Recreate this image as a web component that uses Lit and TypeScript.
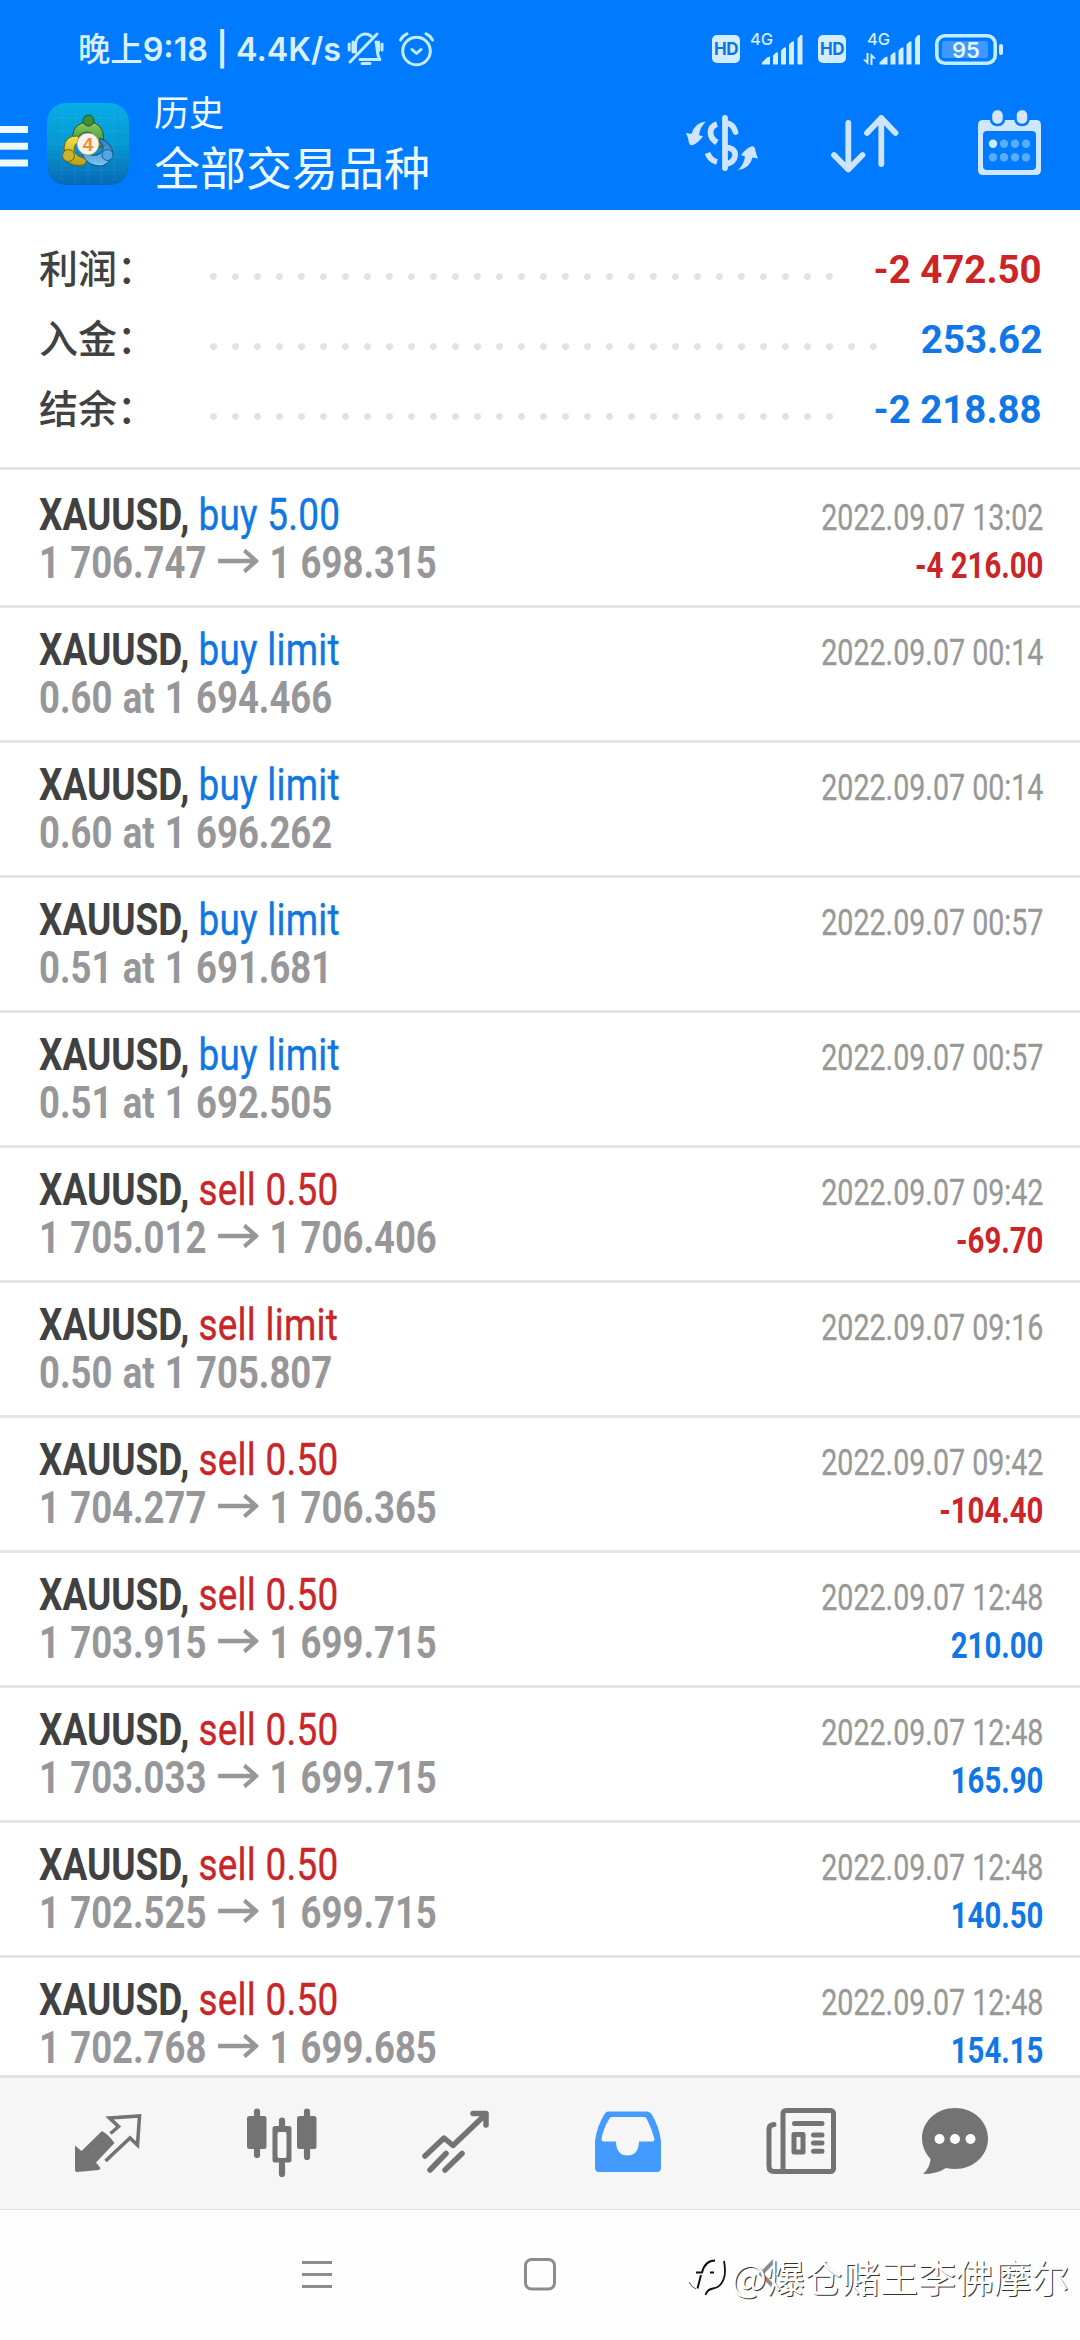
import { LitElement, html, svg, css } from "lit";
import { customElement } from "lit/decorators.js";
import { classMap } from "lit/directives/class-map.js";

interface Deal {
  side: "buy" | "sell";
  label: string;
  open: string;
  close?: string;
  time: string;
  profit?: string;
}

const DEALS: Deal[] = [
  { side: "buy", label: "buy 5.00", open: "1 706.747", close: "1 698.315", time: "2022.09.07 13:02", profit: "-4 216.00" },
  { side: "buy", label: "buy limit", open: "0.60 at 1 694.466", time: "2022.09.07 00:14" },
  { side: "buy", label: "buy limit", open: "0.60 at 1 696.262", time: "2022.09.07 00:14" },
  { side: "buy", label: "buy limit", open: "0.51 at 1 691.681", time: "2022.09.07 00:57" },
  { side: "buy", label: "buy limit", open: "0.51 at 1 692.505", time: "2022.09.07 00:57" },
  { side: "sell", label: "sell 0.50", open: "1 705.012", close: "1 706.406", time: "2022.09.07 09:42", profit: "-69.70" },
  { side: "sell", label: "sell limit", open: "0.50 at 1 705.807", time: "2022.09.07 09:16" },
  { side: "sell", label: "sell 0.50", open: "1 704.277", close: "1 706.365", time: "2022.09.07 09:42", profit: "-104.40" },
  { side: "sell", label: "sell 0.50", open: "1 703.915", close: "1 699.715", time: "2022.09.07 12:48", profit: "210.00" },
  { side: "sell", label: "sell 0.50", open: "1 703.033", close: "1 699.715", time: "2022.09.07 12:48", profit: "165.90" },
  { side: "sell", label: "sell 0.50", open: "1 702.525", close: "1 699.715", time: "2022.09.07 12:48", profit: "140.50" },
  { side: "sell", label: "sell 0.50", open: "1 702.768", close: "1 699.685", time: "2022.09.07 12:48", profit: "154.15" },
];

const TOTALS = [
  { name: "利润：", value: "-2 472.50", red: true, dots: 29 },
  { name: "入金：", value: "253.62", red: false, dots: 31 },
  { name: "结余：", value: "-2 218.88", red: false, dots: 29 },
];

const signal = svg`
  <path d="M0 30V28L5 23L8 22V30Z M11 30V21L14 18H16V30Z M19 30V16L22 13H24V30Z M27 30V10L30 7H32V30Z M35.500 30V4L38.500 0.500H40.500V30Z"/>`;

@customElement("status-bar")
class StatusBar extends LitElement {
  static styles = css`
    :host { display: flex; height: 98px; align-items: center; padding: 0 77px 0 78px; color: #d9f1ff; }
    svg { display: block; flex: none; fill: #d3edff; overflow: visible; }
    .clock { font: 500 33px/40px Inter, "Noto Sans CJK SC", sans-serif; width: 270px; white-space: pre; }
    .clock span { display: inline-block; transform-origin: left center; transform: scaleX(0.98); }
    .clock b { font-weight: 600; }
    .line { fill: none; stroke: #c4ecff; stroke-width: 3; stroke-linecap: round; stroke-linejoin: round; }
    .alarm { margin-left: 16px; }
    .right { margin-left: auto; display: flex; align-items: center; }
    .hd { width: 28px; height: 28px; border-radius: 5px; background: #d3edff; color: #0b74e6; font: 700 17px/29px Inter, sans-serif; text-align: center; letter-spacing: -0.5px; }
    .sig { margin-left: 10px; }
    .sig text { font: 500 16.5px Inter, sans-serif; }
    .hd.second { margin-left: 15px; }
    .sig.second { margin-left: 17px; }
    .battery { margin-left: 15px; }
    .battery text { font: 600 22px Inter, sans-serif; fill: #e6f6ff; }
  `;
  render() {
    return html`
      <div class="clock"><span>晚上<b>9:18 | 4.4K/s</b></span></div>
      <svg class="line" width="35" height="34" viewBox="0 0 35 34">
        <path d="M2 30L29 2M7.500 20V14C7.500 2 18 0 23 4M28 10C30 16 28 22 32 27.500H12M1.200 12V18M5 10V20M30.500 10V19M34 12V18" />
        <path d="M14 31.500H22" />
      </svg>
      <svg class="line alarm" width="35" height="35" viewBox="0 0 35 35">
        <circle cx="17.500" cy="19" r="13.800" />
        <path d="M13 17.500L17.500 21.500L22 17.500M1.500 8Q3.500 3.500 8 1.800M33.500 8Q31.500 3.500 27 1.800" />
      </svg>
      <div class="right">
        <div class="hd">HD</div>
        <svg class="sig" width="53" height="32" viewBox="0 0 53 32"><text x="0" y="12">4G</text><g transform="translate(12 1.500)">${signal}</g></svg>
        <div class="hd second">HD</div>
        <svg class="sig second" width="57" height="32" viewBox="0 0 57 32">
          <text x="4" y="12">4G</text>
          <path d="M5.500 20V32L0.500 27V26L3.500 27V20ZM7.500 32V20L12.500 25V26L9.500 25V32Z"/>
          <g transform="translate(16.500 1.500)">${signal}</g>
        </svg>
        <svg class="battery" width="68" height="31" viewBox="0 0 68 31">
          <rect x="1.800" y="1.800" width="58.400" height="27.400" rx="8" fill="none" stroke="#c4ecff" stroke-width="3.600" />
          <rect x="7" y="7" width="46" height="17" rx="2" fill="#3d98ff" />
          <rect x="64" y="10" width="4" height="11" rx="2" />
          <text x="31" y="23.500" text-anchor="middle">95</text>
        </svg>
      </div>`;
  }
}

@customElement("app-header")
class AppHeader extends LitElement {
  static styles = css`
    :host { display: flex; height: 112px; color: #effaff; font-family: "Noto Sans CJK SC", sans-serif; }
    svg { display: block; flex: none; }
    .menu { margin-top: 28px; fill: #effaff; }
    .logo { margin: 5px 0 0 19px; }
    .logo text { font: 700 19px "Liberation Sans", sans-serif; fill: #f08a3c; }
    .titles { margin-left: 25px; white-space: nowrap; }
    .small { font-size: 35px; line-height: 35px; margin-top: -5px; }
    .big { font-size: 46px; line-height: 50px; margin-top: 12px; }
    .tools { margin-left: auto; padding-right: 39px; display: flex; align-items: flex-start; }
    .dollar { margin-top: 17px; }
    .sort { margin: 16px 0 0 73px; }
    .calendar { margin: 12px 0 0 78px; }
    .stroke { fill: none; stroke: #cfe4ff; stroke-width: 5.800; stroke-linecap: round; stroke-linejoin: round; }
    .butt { stroke-linecap: butt; }
  `;
  render() {
    const cells = [15, 26, 37, 48];
    const arrow = svg`<path d="M20 6.500Q14 12 13 20L17 21.500Q12 28 7 30Q4 31 3 28Q2 22 0 18L5.500 19Q8 8 20 6.500Z" fill="#cfe4ff"/>`;
    return html`
      <svg class="menu" width="28" height="41" viewBox="0 0 28 41"><path d="M0 0H28V7H0ZM0 16.700H28V23.700H0ZM0 33.500H28V40.500H0Z" /></svg>
      <svg class="logo" width="82" height="82" viewBox="0 0 82 82">
        <defs>
          <linearGradient id="bg" x2="0" y2="1"><stop offset="0" stop-color="#06ace8" /><stop offset="0.500" stop-color="#0699d0" /><stop offset="1" stop-color="#0768b6" /></linearGradient>
          <linearGradient id="gr" x2="0" y2="1"><stop offset="0" stop-color="#8fc75a" /><stop offset="1" stop-color="#2b8a2c" /></linearGradient>
          <linearGradient id="ye" x2="0" y2="1"><stop offset="0" stop-color="#f1e54c" /><stop offset="1" stop-color="#b99d14" /></linearGradient>
          <linearGradient id="bl" x2="0" y2="1"><stop offset="0" stop-color="#2b78bf" /><stop offset="1" stop-color="#7cc6f2" /></linearGradient>
        </defs>
        <rect width="82" height="82" rx="19" fill="url(#bg)" />
        <path d="M15 4V78M28 2V80M41 2V80M54 2V80M67 4V78M4 15H78M2 28H80M2 41H80M2 54H80M4 67H78" stroke="#5cc9ee" stroke-opacity="0.140" fill="none" />
        <path d="M26 38Q24 24 35 20H48Q59 25 56 43L49 46Q50 30 41 29Q33 29 31 36Z" fill="url(#gr)" stroke="#26531f" />
        <path d="M31 33Q18 32 17 45L20 58Q26 64 37 62L41 56Q28 54 27 47Q27 41 32 39Z" fill="url(#ye)" stroke="#6d6418" />
        <path d="M53 35Q65 40 66 51Q63 60 55 63Q42 64 35 52L41 51Q51 55 56 47Q57 41 52 39Z" fill="url(#bl)" stroke="#164c7c" />
        <circle cx="41.500" cy="17.500" r="5.500" fill="#3d8f39" stroke="#205320" />
        <circle cx="21.500" cy="52.500" r="6" fill="#c9b32c" stroke="#6d6418" />
        <circle cx="60.500" cy="52" r="5.500" fill="#4fa6e2" stroke="#1b5c92" />
        <circle cx="41" cy="41" r="11" fill="#f8f3ec" stroke="#a5966d" stroke-width="0.800" />
        <text x="41" y="48" text-anchor="middle">4</text>
      </svg>
      <div class="titles"><div class="small">历史</div><div class="big">全部交易品种</div></div>
      <div class="tools">
        <svg class="dollar" width="72" height="56" viewBox="0 0 72 56">
          ${arrow}
          <g transform="rotate(180 36 30.750)">${arrow}</g>
          <path class="stroke" d="M39 3V53M41 8Q47 9 49.500 17M41 32.500Q50 34 49 41Q48 47 41 49" />
          <path class="stroke butt" d="M31 9Q24.500 11 24.500 18Q25 24 31 27.500M21.500 38Q24 45 31 47" />
        </svg>
        <svg class="sort" width="69" height="60" viewBox="0 0 69 60">
          <path class="stroke" d="M17.300 9V55M3 41L17.300 55.500L31.500 41M50.300 50V4M36 19L50.300 4L64.500 19" />
        </svg>
        <svg class="calendar" width="63" height="65" viewBox="0 0 63 65">
          <path fill="#cfe6ff" fill-rule="evenodd" d="M5 10H58Q63 10 63 15V60Q63 65 58 65H5Q0 65 0 60V15Q0 10 5 10ZM9 21Q5 21 5 25V56Q5 60 9 60H54Q58 60 58 56V25Q58 21 54 21Z" />
          <rect x="13" y="-1" width="13" height="16" rx="6" fill="#d6e4ff" stroke="#007aff" stroke-width="2.500" />
          <rect x="37.500" y="-1" width="13" height="16" rx="6" fill="#d6e4ff" stroke="#007aff" stroke-width="2.500" />
          ${[33.7, 47.3].map((y, r) => cells.map((x, c) => svg`<circle cx=${x} cy=${y} r="4.200" fill=${r + c === 0 ? "#c9efff" : "#57adff"} />`))}
        </svg>
      </div>`;
  }
}

@customElement("totals-panel")
class TotalsPanel extends LitElement {
  static styles = css`
    :host { display: block; height: 260px; box-sizing: border-box; padding: 23px 38px 0 39px; border-bottom: 3px solid #e4e4e4; background: #fff; }
    .row { display: flex; height: 70px; align-items: flex-start; }
    .name { width: 171px; font: 500 39px/66px "Noto Sans CJK SC", sans-serif; color: #414141; }
    .dots { height: 7px; margin-top: 40px; background: radial-gradient(circle at 3.500px 3.500px, #e2e2e2 0 3px, transparent 3.800px) 0 0 / 22px 7px repeat-x; }
    .value { margin-left: auto; font: 700 39px/74px Roboto, sans-serif; color: #1177e6; white-space: pre; transform: scaleX(0.985); transform-origin: right center; }
    .red { color: #cc2427; }
  `;
  render() {
    return TOTALS.map((t) => html`<div class="row">
      <span class="name">${t.name}</span>
      <span class="dots" style="width:${t.dots * 22}px"></span>
      <span class=${classMap({ value: true, red: t.red })}>${t.value}</span>
    </div>`);
  }
}

@customElement("deal-list")
class DealList extends LitElement {
  static styles = css`
    :host { display: block; flex: 1; min-height: 0; overflow: hidden; padding-top: 3px; background: #fff; font-family: Roboto, sans-serif; white-space: pre; }
    .row { display: flex; justify-content: space-between; height: 135px; box-sizing: border-box; border-bottom: 3px solid #e4e4e4; padding: 18px 37px 0 39px; }
    .row:last-child { height: 117px; border-bottom: 0; }
    .left { font-size: 44px; line-height: 48px; }
    .left > div { transform-origin: left top; }
    .title { transform: scaleX(0.839); }
    .price { transform: scaleX(0.829); font-weight: 700; color: #97979a; word-spacing: 1.5px; }
    .right { font-size: 36px; line-height: 48px; text-align: right; padding-top: 3px; }
    .right > div { transform-origin: right top; }
    .sym { font-weight: 700; color: #414141; }
    .buy, .sell { letter-spacing: 0.3px; -webkit-text-stroke: 0.4px currentColor; }
    .buy { color: #1177e0; }
    .sell { color: #c8262a; }
    .arrow { margin: 0 13px 0 14px; vertical-align: 5px; fill: none; stroke: #97979a; stroke-width: 4.500; }
    .time { color: #989898; transform: scaleX(0.795); -webkit-text-stroke: 0.3px currentColor; }
    .profit { font-weight: 700; color: #1177e6; transform: scaleX(0.815); }
    .loss { color: #cc2427; }
  `;
  render() {
    return DEALS.map((d) => html`<div class="row">
      <div class="left"><div class="title"><span class="sym">XAUUSD,</span> <span class=${d.side}>${d.label}</span></div><div class="price">${d.open}${d.close
        ? html`<svg class="arrow" width="49" height="24" viewBox="0 0 48 24" preserveAspectRatio="none"><path d="M0 12H45M31 1.500L45 12L31 22.500" /></svg>${d.close}`
        : ""}</div></div>
      <div class="right"><div class="time">${d.time}</div><div class=${classMap({ profit: true, loss: (d.profit ?? "").startsWith("-") })}>${d.profit ?? ""}</div></div>
    </div>`);
  }
}

@customElement("tab-bar")
class TabBar extends LitElement {
  static styles = css`
    :host { display: flex; height: 135px; box-sizing: border-box; border-top: 3px solid #e2e2e2; border-bottom: 1px solid #dedede; background: #f6f6f6; padding: 30px 91px 0 74px; justify-content: space-between; }
    svg { display: block; fill: #737373; }
    .line { fill: none; stroke: #737373; stroke-linecap: round; stroke-linejoin: round; }
    .sharp { stroke-linecap: butt; stroke-linejoin: miter; }
    .last { margin-left: -20px; }
  `;
  render() {
    return html`
      <svg width="70" height="70" viewBox="-1 -6 70 70">
        <path d="M0 31.500L6.500 37L27 17Q33 20 39.500 29L21 48.500L25.500 54L24 56L2 58Q0 58 0 56Z" />
        <path class="line sharp" stroke-width="3.600" d="M35.500 19.500L43.500 12.500L34.500 4L64.500 2L62.500 31L55 24L30.500 47" />
      </svg>
      <svg width="70" height="70" viewBox="0 0 70 70">
        <rect y="8" width="19.500" height="33" rx="2.500" /><rect x="50" y="8" width="19.500" height="33" rx="2.500" />
        <path class="line" stroke-width="6.200" d="M10 3.500V47M60 3.500V49M35 12.500V18M35 56V66" />
        <path fill-rule="evenodd" d="M28 18H42Q44.500 18 44.500 20.500V52Q44.500 54.500 42 54.500H28Q25.500 54.500 25.500 52V20.500Q25.500 18 28 18ZM32 24Q30.500 24 30.500 26V48Q30.500 50 32 50H38Q39.500 50 39.500 48V26Q39.500 24 38 24Z" />
      </svg>
      <svg width="70" height="70" viewBox="-2 -2 70 70">
        <path class="line" stroke-width="5.500" d="M3 46L22 28L31 35.500L64 4M51 3.500H64V15M8 60L24 43.500M23 60L40 43.500" />
      </svg>
      <svg width="70" height="70" viewBox="-2 -3 70 70">
        <path fill="#449bff" fill-rule="evenodd" d="M13 0.500H52Q55 0.500 56.500 3Q64 15 66 30V57Q66 61 62 61H4Q0 61 0 57V30Q2 15 9.500 3Q11 0.500 13 0.500ZM17 6Q15 6 14.500 7.500Q8 18 6.500 28Q6.500 30.500 9 30.500H21Q21.500 44.500 32.500 44.500Q43.500 44.500 44 30.500H57Q59.500 30.500 59.500 28Q57 18 51.500 7.500Q51 6 49 6Z" />
      </svg>
      <svg width="70" height="70" viewBox="0 0 70 70">
        <rect class="line" stroke-width="5" x="17" y="2.500" width="50.500" height="61" rx="3" />
        <path class="line" stroke-width="5" d="M8 16.500Q3 17 3 21V58Q3 63.500 8 63.500H17M28.500 15.500H56M47.500 27H56M47.500 35H56M47.500 43.300H56" />
        <rect class="line" stroke-width="5" x="28" y="26.500" width="9" height="17.500" />
      </svg>
      <svg class="last" width="70" height="70" viewBox="-3 0 70 70">
        <path d="M33 0C51 0 66 13 66 30.500S51 61 33 61Q28 61 24 60Q15 66 1 66Q8 60 8.500 51Q0 42 0 30.500C0 13 15 0 33 0Z" />
        <circle cx="17.500" cy="31" r="5" fill="#fff" /><circle cx="33" cy="31" r="5" fill="#fff" /><circle cx="48.500" cy="31" r="5" fill="#fff" />
      </svg>`;
  }
}

@customElement("system-bar")
class SystemBar extends LitElement {
  static styles = css`
    :host { display: flex; position: relative; height: 130px; background: #fefefe; padding: 47px 0 0 302px; box-sizing: border-box; }
    svg { display: block; fill: none; stroke: #8c8c8c; stroke-width: 3; }
    .home { margin-left: 192px; }
    .back { margin-left: 203px; }
    .mark { position: absolute; left: 688px; top: 38px; display: flex; align-items: center; white-space: nowrap; color: #fff; font: 400 37.800px/56px "Noto Sans CJK SC", sans-serif; text-shadow: 1px 1px 0.500px #333; }
    .mark svg { stroke: #111; margin-right: 3px; margin-top: 4px; }
  `;
  render() {
    return html`
      <svg width="30" height="34" viewBox="0 0 30 34"><path d="M0 5.500H30M0 17.500H30M0 29.500H30" /></svg>
      <svg class="home" width="32" height="34" viewBox="0 0 32 34"><rect x="1.500" y="2.500" width="29" height="29.500" rx="6" /></svg>
      <svg class="back" width="16" height="34" viewBox="0 0 16 34"><path stroke-width="4" d="M15 4L2 17L15 30" /></svg>
      <div class="mark">
        <svg width="40" height="40" viewBox="0 0 40 40">
          <path stroke-width="2" d="M8 14.500H14Q17 2.500 27 2.500M22 14.500H26M13 17L9.500 30.500" />
          <path stroke-width="1.800" d="M36 3Q38 14 36 20Q33 29.500 25 30.500Q19 31.500 17.500 37" />
          <path stroke-width="0.700" d="M1 24Q3 29 8 31" />
        </svg>
        <span>@爆仓赌王李佛摩尔</span>
      </div>`;
  }
}

@customElement("app-root")
class AppRoot extends LitElement {
  static styles = css`
    :host { display: flex; flex-direction: column; width: 1080px; height: 2340px; overflow: hidden; background: #fff; }
    .top { background: #007aff; height: 210px; flex: none; }
    totals-panel, tab-bar, system-bar { flex: none; }
  `;
  render() {
    return html`
      <div class="top"><status-bar></status-bar><app-header></app-header></div>
      <totals-panel></totals-panel>
      <deal-list></deal-list>
      <tab-bar></tab-bar>
      <system-bar></system-bar>`;
  }
}
